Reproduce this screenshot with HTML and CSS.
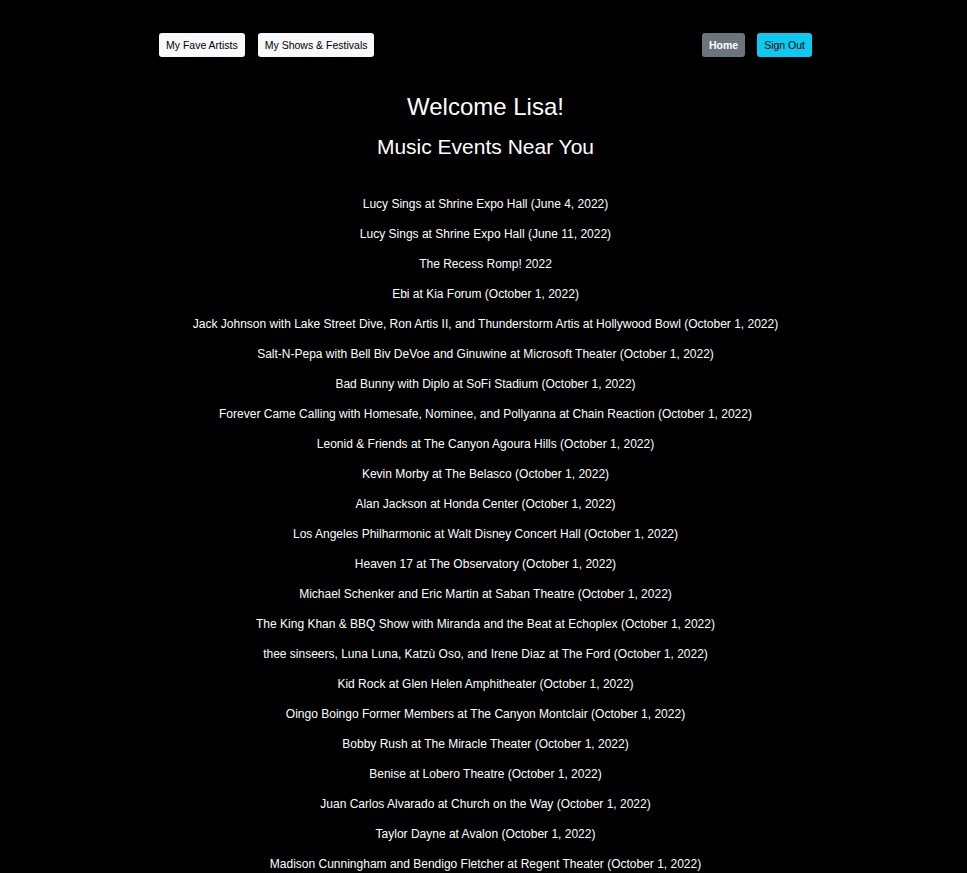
FILE: index.html
```html
<!DOCTYPE html>
<html>
<head>
<meta charset="utf-8">
<link rel="stylesheet" href="styles.css">
</head>
<body>
<div class="page">
<nav class="nav">
  <div class="nav-group">
    <a class="btn btn-light">My Fave Artists</a>
    <a class="btn btn-light">My Shows &amp; Festivals</a>
  </div>
  <div class="nav-group nav-group-right">
    <a class="btn btn-secondary">Home</a>
    <a class="btn btn-info">Sign Out</a>
  </div>
</nav>
<main class="main">
  <h1 class="title">Welcome Lisa!</h1>
  <h2 class="subtitle">Music Events Near You</h2>
  <ul class="events">
    <li>Lucy Sings at Shrine Expo Hall (June 4, 2022)</li>
    <li>Lucy Sings at Shrine Expo Hall (June 11, 2022)</li>
    <li>The Recess Romp! 2022</li>
    <li>Ebi at Kia Forum (October 1, 2022)</li>
    <li>Jack Johnson with Lake Street Dive, Ron Artis II, and Thunderstorm Artis at Hollywood Bowl (October 1, 2022)</li>
    <li>Salt-N-Pepa with Bell Biv DeVoe and Ginuwine at Microsoft Theater (October 1, 2022)</li>
    <li>Bad Bunny with Diplo at SoFi Stadium (October 1, 2022)</li>
    <li>Forever Came Calling with Homesafe, Nominee, and Pollyanna at Chain Reaction (October 1, 2022)</li>
    <li>Leonid &amp; Friends at The Canyon Agoura Hills (October 1, 2022)</li>
    <li>Kevin Morby at The Belasco (October 1, 2022)</li>
    <li>Alan Jackson at Honda Center (October 1, 2022)</li>
    <li>Los Angeles Philharmonic at Walt Disney Concert Hall (October 1, 2022)</li>
    <li>Heaven 17 at The Observatory (October 1, 2022)</li>
    <li>Michael Schenker and Eric Martin at Saban Theatre (October 1, 2022)</li>
    <li>The King Khan &amp; BBQ Show with Miranda and the Beat at Echoplex (October 1, 2022)</li>
    <li>thee sinseers, Luna Luna, Katzù Oso, and Irene Diaz at The Ford (October 1, 2022)</li>
    <li>Kid Rock at Glen Helen Amphitheater (October 1, 2022)</li>
    <li>Oingo Boingo Former Members at The Canyon Montclair (October 1, 2022)</li>
    <li>Bobby Rush at The Miracle Theater (October 1, 2022)</li>
    <li>Benise at Lobero Theatre (October 1, 2022)</li>
    <li>Juan Carlos Alvarado at Church on the Way (October 1, 2022)</li>
    <li>Taylor Dayne at Avalon (October 1, 2022)</li>
    <li>Madison Cunningham and Bendigo Fletcher at Regent Theater (October 1, 2022)</li>
    <li>Elvis Costello &amp; The Imposters at The Greek Theatre (October 1, 2022)</li>
    <li>Lord Huron at Hollywood Bowl (October 1, 2022)</li>
  </ul>
</main>
</div>
</body>
</html>
```
FILE: styles.css
```css
html, body {
  margin: 0;
  padding: 0;
  background: #000;
  color: #fff;
  font-family: "Liberation Sans", Arial, sans-serif;
}
.page {
  padding-left: 4px;
}
.nav {
  width: 653px;
  margin: 0 auto;
  padding-top: 33px;
  display: flex;
  justify-content: space-between;
}
.nav-group {
  display: flex;
  gap: 13px;
}
.nav-group-right {
  gap: 12px;
}
.btn {
  display: inline-block;
  font-size: 10.5px;
  line-height: 16px;
  padding: 4px 7px;
  border-radius: 3px;
  cursor: pointer;
}
.btn-light { background: #f8f9fa; color: #000; }
.btn-secondary { background: #6c757d; color: #fff; font-weight: bold; }
.btn-info { background: #0dcaf0; color: #000; }
.main {
  text-align: center;
}
.title {
  font-size: 24px;
  font-weight: normal;
  line-height: 28px;
  margin: 36px 0 0;
}
.subtitle {
  font-size: 21px;
  font-weight: normal;
  line-height: 24px;
  margin: 14px 0 0;
}
.events {
  list-style: none;
  margin: 30px 0 0;
  padding: 0;
  font-size: 12px;
}
.events li {
  line-height: 14px;
  padding: 8px 0;
}
```
